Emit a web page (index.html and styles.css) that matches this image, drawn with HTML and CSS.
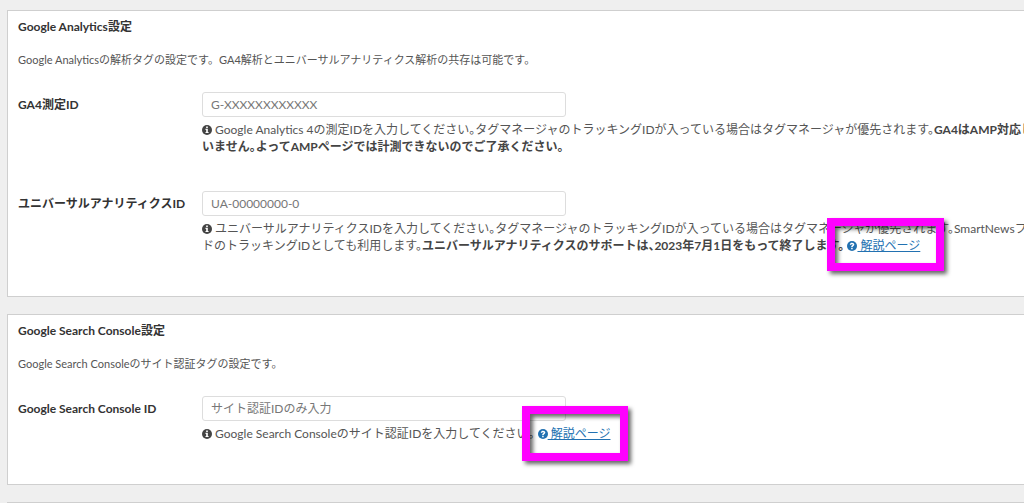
FILE: index.html
```html
<!DOCTYPE html>
<html lang="ja">
<head>
<meta charset="utf-8">
<title>アクセス解析・認証</title>
<link rel="stylesheet" href="styles.css">
</head>
<body>
<svg class="sprite" aria-hidden="true">
  <symbol id="info" viewBox="0 0 12 12"><circle cx="6" cy="6" r="6"/><path class="mark" d="M5 1.800h2v1.700H5zM4.200 4.600H7v3.800h.9v1.300H4.200V8.400h.8V5.900h-.8z"/></symbol>
  <symbol id="help" viewBox="0 0 12 12"><circle cx="6" cy="6" r="6"/><path class="mark" d="M5 8.300h1.800V10H5zM3.300 4.200C3.700 2.700 4.700 2 6.100 2c1.500 0 2.700.9 2.700 2.300 0 1.700-2 1.900-2 3v.3H5V7c0-1.500 1.800-1.800 1.800-2.700 0-.4-.3-.6-.8-.6s-.8.400-1.100 1.100z"/></symbol>
</svg>
<main class="page">
  <section class="panel">
    <h2 class="title">Google Analytics設定</h2>
    <p class="intro">Google Analyticsの解析タグの設定です。GA4解析とユニバーサルアナリティクス解析の共存は可能です。</p>
    <div class="row">
      <label class="label" for="ga4">GA4測定ID</label>
      <div class="field">
        <input class="input" id="ga4" type="text" placeholder="G-XXXXXXXXXXXX">
        <p class="hint"><svg class="icon"><use href="#info"/></svg> Google Analytics 4の測定IDを入力してください。タグマネージャのトラッキングIDが入っている場合はタグマネージャが優先されます。<strong>GA4はAMP対応し<br>いません。よってAMPページでは計測できないのでご了承ください。</strong></p>
      </div>
    </div>
    <div class="row">
      <label class="label" for="ua">ユニバーサルアナリティクスID</label>
      <div class="field">
        <input class="input" id="ua" type="text" placeholder="UA-00000000-0">
        <p class="hint"><svg class="icon"><use href="#info"/></svg> ユニバーサルアナリティクスIDを入力してください。タグマネージャのトラッキングIDが入っている場合はタグマネージャが優先されます。SmartNewsフ<br>ドのトラッキングIDとしても利用します。<strong>ユニバーサルアナリティクスのサポートは、2023年7月1日をもって終了します。</strong> <a class="help" href="#"><svg class="icon"><use href="#help"/></svg> 解説ページ<span class="callout callout-wide"></span></a></p>
      </div>
    </div>
  </section>
  <section class="panel">
    <h2 class="title">Google Search Console設定</h2>
    <p class="intro">Google Search Consoleのサイト認証タグの設定です。</p>
    <div class="row">
      <label class="label" for="gsc">Google Search Console ID</label>
      <div class="field">
        <input class="input" id="gsc" type="text" placeholder="サイト認証IDのみ入力">
        <p class="hint"><svg class="icon"><use href="#info"/></svg> Google Search Consoleのサイト認証IDを入力してください。 <a class="help" href="#"><svg class="icon"><use href="#help"/></svg> 解説ページ<span class="callout"></span></a></p>
      </div>
    </div>
  </section>
  <section class="panel"></section>
</main>
</body>
</html>
```
FILE: styles.css
```css
* { box-sizing: border-box; }
body {
  margin: 0;
  overflow: hidden;
  background: #efefef;
  color: #555;
  font: 12px/17px Lato, "Noto Sans CJK JP", sans-serif;
}
.sprite { display: none; }
.page {
  display: flex;
  flex-direction: column;
  gap: 17px;
  height: 100vh;
  overflow: hidden;
  padding: 10px 0 0 7px;
  margin-right: -40px;
}
.panel {
  flex: none;
  background: #fff;
  border: 1px solid #cfcfcf;
  padding: 7px 10px 42px;
}
.title {
  margin: 0;
  font-size: 12px;
  line-height: 17px;
  font-weight: 700;
  color: #333;
}
.intro {
  margin: 16px 0 24px;
  font-size: 11px;
  line-height: 17px;
}
.row {
  display: grid;
  grid-template-columns: 184px 1fr;
}
.row + .row { margin-top: 36px; }
.label {
  padding-top: 4px;
  font-weight: 700;
  color: #333;
}
.input {
  display: block;
  width: 364px;
  height: 25px;
  padding: 0 8px;
  border: 1px solid #ddd;
  border-radius: 3px;
  background: #fff;
  font: inherit;
}
.input::placeholder { color: #777; opacity: 1; }
.hint {
  margin: 4px 0 0;
  white-space: nowrap;
  font-feature-settings: "halt";
}
.hint strong { color: #444; }
.icon {
  width: 10px;
  height: 10px;
  vertical-align: -1px;
  fill: #444;
}
.mark { fill: #fff; }
.help { position: relative; color: #2271b1; }
.help .icon { fill: #2271b1; }
.callout {
  position: absolute;
  inset: -20px -18px -20px -16px;
  border: 8px solid #f0f;
  filter: drop-shadow(3px 3px 2px rgba(0, 0, 0, .6));
}
.callout-wide { inset: -20px -24px -18px -20px; }
```
